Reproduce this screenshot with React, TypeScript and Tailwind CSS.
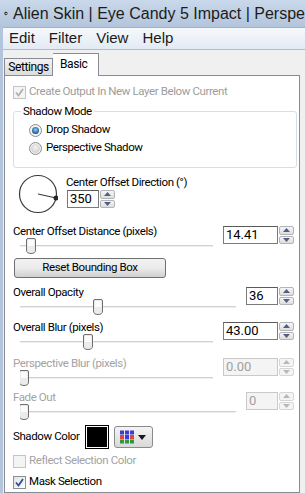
import React from 'react'

const ui = { fontFamily: 'Roboto, "Liberation Sans", Arial, sans-serif', letterSpacing: '-0.4px' }
const chrome = { fontFamily: '"Liberation Sans", Arial, sans-serif' }

function Spin({ value, wide = true, disabled = false }: { value: string; wide?: boolean; disabled?: boolean }) {
  return (
    <div className="flex items-stretch h-[18px]">
      <div
        className={`${wide ? 'w-[55px]' : 'w-[32px]'} border pl-[2px] text-[13px] leading-[16px] tracking-normal ${
          disabled ? 'border-[#c9c9c9] bg-[#f4f4f4] text-[#a0a0a0]' : 'border-[#7a7a7a] border-t-[#5a5a5a] bg-white text-black'
        }`}
      >
        {value}
      </div>
      <div className="ml-[1px] w-[15px] flex flex-col gap-[1px]">
        {[0, 1].map((i) => (
          <div
            key={i}
            className={`flex-1 flex items-center justify-center rounded-[2px] border ${
              disabled ? 'border-[#d6d6d6] bg-[#f4f4f4]' : 'border-[#b4b4b4] bg-gradient-to-b from-[#f6f6f6] to-[#dedede]'
            }`}
          >
            <svg width="7" height="4" viewBox="0 0 7 4">
              <path d={i === 0 ? 'M0 4 L3.5 0 L7 4 Z' : 'M0 0 L3.5 4 L7 0 Z'} fill={disabled ? '#b8b8b8' : '#4d6185'} />
            </svg>
          </div>
        ))}
      </div>
    </div>
  )
}

function Slider({ width, thumb }: { width: number; thumb: number }) {
  return (
    <svg width={width} height="16" viewBox={`0 0 ${width} 16`} className="block">
      <rect x="0" y="7" width={width} height="1" fill="#d2d2d2" />
      <rect x="0" y="8" width={width} height="1" fill="#eeeeee" />
      <path
        d={`M${thumb - 4.5} 2 Q${thumb - 4.5} 0.5 ${thumb - 3} 0.5 L${thumb + 3} 0.5 Q${thumb + 4.5} 0.5 ${thumb + 4.5} 2 L${thumb + 4.5} 12 Q${thumb + 4.5} 15.5 ${thumb} 15.5 Q${thumb - 4.5} 15.5 ${thumb - 4.5} 12 Z`}
        fill="#ebebeb"
        stroke="#6f6f6f"
      />
      <rect x={thumb - 3} y="2" width="6" height="6" fill="#fbfbfb" />
    </svg>
  )
}

function Check({ checked, disabled }: { checked: boolean; disabled?: boolean }) {
  return (
    <div
      className={`w-[13px] h-[13px] border flex items-center justify-center ${
        disabled ? 'border-[#c4c4c4] bg-[#f4f4f4]' : 'border-[#8e8f8f] bg-gradient-to-br from-[#e2e2e2] to-white'
      }`}
    >
      {checked && (
        <svg width="9" height="9" viewBox="0 0 9 9">
          <path d="M1 4.5 L3.5 7.5 L8 1" fill="none" stroke={disabled ? '#b0b0b0' : '#2a4f9c'} strokeWidth="1.8" />
        </svg>
      )}
    </div>
  )
}

function Radio({ on }: { on: boolean }) {
  return (
    <svg width="13" height="13" viewBox="0 0 13 13">
      <defs>
        <radialGradient id={on ? 'ron' : 'roff'} cx="0.5" cy="0.4" r="0.6">
          <stop offset="0" stopColor={on ? '#8fd0f7' : '#f4f4f4'} />
          <stop offset="1" stopColor={on ? '#0d4f8c' : '#cfcfcf'} />
        </radialGradient>
      </defs>
      <circle cx="6.5" cy="6.5" r="6" fill="#f2f2f2" stroke="#8c8c8c" />
      <circle cx="6.5" cy="6.5" r={on ? 3.5 : 4.5} fill={`url(#${on ? 'ron' : 'roff'})`} />
    </svg>
  )
}

function SliderRow({
  label,
  value,
  track,
  thumb,
  wide = true,
  disabled = false,
  className = '',
}: {
  label: string
  value: string
  track: number
  thumb: number
  wide?: boolean
  disabled?: boolean
  className?: string
}) {
  return (
    <div className={`flex justify-between h-[30px] ${disabled ? 'text-[#a3a3a3]' : ''} ${className}`}>
      <div className="flex flex-col">
        <span className="leading-[14px] whitespace-nowrap">{label}</span>
        <div className="ml-[7px]">
          <Slider width={track} thumb={thumb} />
        </div>
      </div>
      <div className="mt-[2px]">
        <Spin value={value} wide={wide} disabled={disabled} />
      </div>
    </div>
  )
}

export default function App() {
  return (
    <div className="w-[305px] h-[493px] overflow-hidden flex flex-col bg-[#f0f0f0] text-black" style={chrome}>
      {/* title bar */}
      <div className="h-[27px] shrink-0 flex items-center bg-gradient-to-b from-[#c9d8ea] to-[#b3c5dc] whitespace-nowrap overflow-hidden">
        <svg width="15" height="15" viewBox="0 0 14 14" className="ml-[4px] mr-[5px]">
          <path d="M3 2 Q8 -1 12 4 Q14 9 9 12.5 Q4 14 2 10 Q0 5 3 2 Z" fill="#1b1b1b" />
          <ellipse cx="7.5" cy="7" rx="3" ry="2.3" fill="#f2f2f2" transform="rotate(30 7.5 7)" />
        </svg>
        <span className="text-[16px] text-[#1c1c1c]">Alien Skin | Eye Candy 5 Impact | Perspe</span>
      </div>
      <div className="flex-1 flex border-l-[3px] border-[#b3c5dc]">
        <div className="flex-1 flex flex-col">
          {/* menu */}
          <div className="h-[23px] shrink-0 flex items-center gap-[14px] pl-[6px] text-[15px] text-[#1a1a1a] bg-gradient-to-b from-[#f6f9fc] to-[#e3eaf3] border-b border-[#b6bcc6] border-t border-t-[#a0b2c9]">
            <span>Edit</span>
            <span>Filter</span>
            <span>View</span>
            <span>Help</span>
          </div>
          {/* tabs */}
          <div className="flex items-end pl-[1px] h-[25px] shrink-0 text-[12px]" style={ui}>
            <div className="h-[17px] w-[49px] flex items-center justify-center border border-[#898c95] border-b-0 bg-gradient-to-b from-[#f2f2f2] to-[#dcdcdc]">
              Settings
            </div>
            <div className="h-[23px] w-[46px] pl-[7px] pb-[3px] flex items-center border border-[#898c95] border-b-0 border-l-0 bg-white mb-[-1px] relative z-10">
              Basic
            </div>
          </div>
          <div
            className="flex-1 ml-[1px] mr-[5px] border border-[#898c95] bg-white pl-[8px] pr-[5px] pt-[8px] flex flex-col text-[11.5px]"
            style={ui}
          >
            <div className="flex items-center gap-[3px] text-[#9d9d9d] h-[16px]">
              <Check checked disabled />
              <span>Create Output In New Layer Below Current</span>
            </div>
            <div className="mt-[11px] -mr-[3px] border border-[#d5dfe5] rounded-[3px] h-[57px] relative">
              <span className="absolute -top-[8px] left-[7px] bg-white px-[2px] leading-[14px]">Shadow Mode</span>
              <div className="pt-[11px] pl-[15px] flex flex-col gap-[4px]">
                <div className="flex items-center gap-[4px] h-[14px]">
                  <Radio on />
                  <span>Drop Shadow</span>
                </div>
                <div className="flex items-center gap-[4px] h-[14px]">
                  <Radio on={false} />
                  <span>Perspective Shadow</span>
                </div>
              </div>
            </div>
            {/* direction */}
            <div className="flex h-[56px]">
              <svg width="40" height="40" viewBox="0 0 40 40" className="ml-[5px] mt-[6px]">
                <circle cx="20" cy="20" r="18.5" fill="none" stroke="#3a3a3a" strokeWidth="1.2" />
                <line x1="20" y1="20" x2="38" y2="24" stroke="#3a3a3a" strokeWidth="1.2" />
                <circle cx="38" cy="24" r="2.5" fill="#262626" />
              </svg>
              <div className="ml-[8px] mt-[7px] flex flex-col">
                <span className="leading-[14px]">Center Offset Direction (°)</span>
                <div className="mt-[1px] ml-[1px]">
                  <Spin value="350" wide={false} />
                </div>
              </div>
            </div>
            <SliderRow label="Center Offset Distance (pixels)" value="14.41" track={193} thumb={11} />
            <div className="mt-[4px] ml-[1px] w-[152px] h-[20px] shrink-0 flex items-center justify-center border border-[#707070] rounded-[3px] bg-gradient-to-b from-[#f2f2f2] via-[#ebebeb] to-[#d0d0d0]">
              Reset Bounding Box
            </div>
            <SliderRow className="mt-[7px]" label="Overall Opacity" value="36" wide={false} track={216} thumb={78} />
            <SliderRow className="mt-[5px]" label="Overall Blur (pixels)" value="43.00" track={193} thumb={68} />
            <SliderRow className="mt-[6px]" label="Perspective Blur (pixels)" value="0.00" track={193} thumb={4} disabled />
            <SliderRow className="mt-[4px]" label="Fade Out" value="0" wide={false} track={216} thumb={4} disabled />
            {/* shadow color */}
            <div className="flex items-center mt-[5px] h-[24px]">
              <span className="w-[72px] whitespace-nowrap">Shadow Color</span>
              <div className="w-[24px] h-[24px] border border-black p-[1px] bg-white">
                <div className="w-full h-full bg-black" />
              </div>
              <div className="ml-[5px] w-[39px] h-[22px] flex items-center gap-[3px] pl-[4px] border border-[#8a8a8a] rounded-[3px] bg-gradient-to-b from-[#f4f4f4] to-[#d9d9d9]">
                <svg width="16" height="14" viewBox="0 0 16 14">
                  {[
                    ['#3c3cd8', '#3c3cd8', '#3c3cd8'],
                    ['#e0463c', '#3c3cd8', '#e0463c'],
                    ['#2e9a3c', '#2e9a3c', '#2e9a3c'],
                  ].map((row, r) =>
                    row.map((c, i) => <rect key={`${r}${i}`} x={i * 5 + 1} y={r * 4.5 + 0.5} width="4" height="4" fill={c} />)
                  )}
                </svg>
                <svg width="8" height="5" viewBox="0 0 8 5">
                  <path d="M0 0 L8 0 L4 5 Z" fill="#1a1a1a" />
                </svg>
              </div>
            </div>
            <div className="flex items-center gap-[3px] mt-[4px] h-[16px] text-[#a3a3a3]">
              <Check checked={false} disabled />
              <span>Reflect Selection Color</span>
            </div>
            <div className="flex items-center gap-[3px] mt-[5px] h-[16px]">
              <Check checked />
              <span>Mask Selection</span>
            </div>
          </div>
        </div>
      </div>
    </div>
  )
}
